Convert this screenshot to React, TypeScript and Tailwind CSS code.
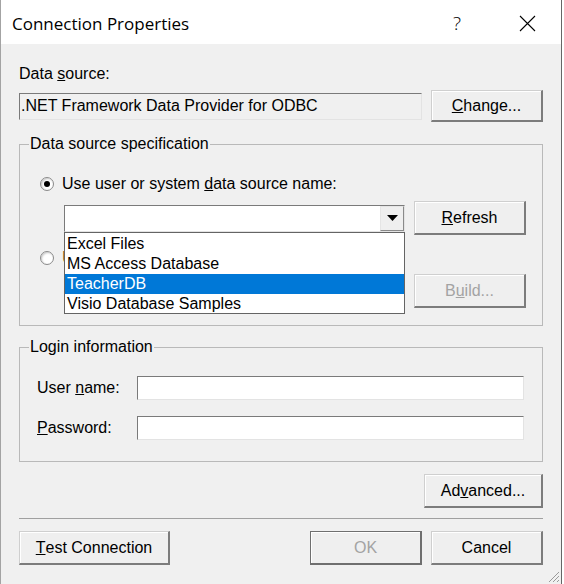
import React from 'react';

const sans = "font-['Liberation_Sans',Arial,sans-serif]";

function WinButton({
  children,
  w,
  h = 'h-[34px]',
  disabled,
  isDefault,
}: {
  children: React.ReactNode;
  w: string;
  h?: string;
  disabled?: boolean;
  isDefault?: boolean;
}) {
  return (
    <button
      type="button"
      className={[
        w,
        h,
        'shrink-0 bg-[#efefef] text-[16px] leading-none flex items-center justify-center',
        'shadow-[inset_1px_1px_0_#ffffff]',
        isDefault
          ? 'border border-[#6f6f6f] border-b-2 border-r-2'
          : 'border-t border-l border-[#cfcfcf] border-r-2 border-b-2 border-r-[#7c7c7c] border-b-[#7c7c7c]',
        disabled ? 'text-[#a3a3a3]' : 'text-black',
      ].join(' ')}
    >
      {children}
    </button>
  );
}

function Radio({ checked }: { checked?: boolean }) {
  return (
    <span className="w-[14px] h-[14px] shrink-0 rounded-full border border-[#8a8a8a] bg-white flex items-center justify-center shadow-[inset_1px_1px_2px_#c8c8c8]">
      {checked && <span className="w-[6px] h-[6px] rounded-full bg-black" />}
    </span>
  );
}

const sunken = 'border-t border-l border-[#7a7a7a] border-r border-b border-r-[#e3e3e3] border-b-[#e3e3e3]';

const dsns = ['Excel Files', 'MS Access Database', 'TeacherDB', 'Visio Database Samples'];

export default function App() {
  return (
    <div className={`w-[564px] h-[584px] bg-white text-black text-[16px] ${sans}`}>
      <div className="w-[562px] h-[584px] flex flex-col border-l border-[#a3a3a3] border-r border-r-[#666666]">
        {/* title bar */}
        <div className="h-[44px] shrink-0 bg-white flex items-center pl-[11px] pt-[3px]">
          <span className="flex-1 font-['Open_Sans',sans-serif] text-[17px] text-black">Connection Properties</span>
          <span className="w-[46px] text-center font-['Open_Sans',sans-serif] font-light text-[19px] leading-none">?</span>
          <span className="w-[46px] ml-[24px] mr-[11px] flex justify-center">
            <svg width="17" height="17" viewBox="0 0 17 17">
              <path d="M1 1L16 16M16 1L1 16" stroke="#000" strokeWidth="1.1" fill="none" />
            </svg>
          </span>
        </div>

        <div className="relative flex-1 bg-[#f0f0f0] px-[18px]">
          <div className="mt-[21px] h-[18px] leading-[18px]">
            Data <span className="underline">s</span>ource:
          </div>
          <div className="mt-[7px] h-[32px] flex items-center gap-[9px]">
            <div className={`w-[403px] h-[27px] bg-[#f0f0f0] ${sunken} pl-[1px] flex items-center`}>
              .NET Framework Data Provider for ODBC
            </div>
            <WinButton w="w-[112px]" h="h-[32px]">
              <span className="underline">C</span>hange...
            </WinButton>
          </div>

          <fieldset className="mt-[13px] border border-[#b9b9b9] pb-[17px]">
            <legend className="ml-[9px] px-[1px] leading-[18px]">Data source specification</legend>
            <div className="mt-[22px] h-[18px] pl-[20px] flex items-center gap-[8px]">
              <Radio checked />
              <span>
                Use user or system <span className="underline">d</span>ata source name:
              </span>
            </div>
            <div className="mt-[8px] h-[34px] ml-[44px] flex items-center gap-[9px]">
              <div className={`relative w-[341px] h-[27px] bg-white ${sunken}`}>
                <div className="absolute right-0 top-0 w-[24px] h-[25px] bg-[#efefef] border-t border-l border-[#e5e5e5] border-r border-b border-r-[#8a8a8a] border-b-[#8a8a8a] flex items-center justify-center">
                  <svg width="11" height="6" viewBox="0 0 11 6">
                    <path d="M0 0H11L5.5 6Z" fill="#000" />
                  </svg>
                </div>
                {/* open drop-down list */}
                <div className="absolute left-[-1px] top-[26px] w-[341px] h-[82px] bg-white border border-[#646464] pt-[1px] z-10">
                  {dsns.map((d) => (
                    <div
                      key={d}
                      className={`h-[20px] leading-[20px] pl-[2px] ${d === 'TeacherDB' ? 'bg-[#0078d7] text-white' : ''}`}
                    >
                      {d}
                    </div>
                  ))}
                </div>
              </div>
              <WinButton w="w-[112px]">
                <span className="underline">R</span>efresh
              </WinButton>
            </div>
            <div className="mt-[14px] h-[18px] pl-[20px] flex items-center gap-[8px]">
              <Radio />
              {/* label sits under the open list */}
              <span className="whitespace-nowrap text-[#9a6b2a]">Use connection string:</span>
            </div>
            <div className="mt-[7px] h-[34px] ml-[44px] flex items-center gap-[9px]">
              <div className={`w-[341px] h-[27px] bg-[#f0f0f0] ${sunken}`} />
              <WinButton w="w-[112px]" disabled>
                B<span className="underline">u</span>ild...
              </WinButton>
            </div>
          </fieldset>

          <fieldset className="mt-[12px] border border-[#b9b9b9] pb-[21px]">
            <legend className="ml-[9px] px-[1px] leading-[18px]">Login information</legend>
            <div className="mt-[20px] h-[24px] pl-[17px] flex items-center">
              <span className="w-[100px]">
                User <span className="underline">n</span>ame:
              </span>
              <div className={`w-[387px] h-[24px] bg-white ${sunken}`} />
            </div>
            <div className="mt-[16px] h-[24px] pl-[17px] flex items-center">
              <span className="w-[100px]">
                <span className="underline">P</span>assword:
              </span>
              <div className={`w-[387px] h-[24px] bg-white ${sunken}`} />
            </div>
          </fieldset>

          <div className="mt-[12px] flex justify-end">
            <WinButton w="w-[119px]">
              Ad<span className="underline">v</span>anced...
            </WinButton>
          </div>
          <div className="mt-[10px] h-px bg-[#a0a0a0]" />
          <div className="mt-[12px] flex items-center gap-[9px]">
            <WinButton w="w-[151px]">
              <span className="underline">T</span>est Connection
            </WinButton>
            <div className="flex-1" />
            <WinButton w="w-[112px]" disabled isDefault>
              OK
            </WinButton>
            <WinButton w="w-[112px]">Cancel</WinButton>
          </div>

          {/* size grip */}
          <svg className="absolute right-[1px] bottom-[1px]" width="13" height="13" viewBox="0 0 13 13">
            <path d="M12 2L2 12M12 6L6 12M12 10L10 12" stroke="#9a9a9a" strokeWidth="1" fill="none" />
          </svg>
        </div>
      </div>
    </div>
  );
}
